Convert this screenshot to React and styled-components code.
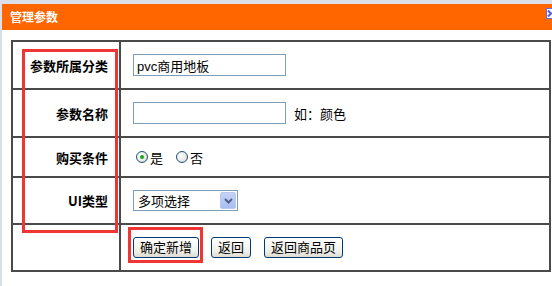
import React from "react";
import styled, { createGlobalStyle } from "styled-components";

const GlobalStyle = createGlobalStyle`
  html, body {
    margin: 0;
    padding: 0;
    background: #dadfea;
  }
  body {
    font-family: "Liberation Sans", "Noto Sans CJK SC", sans-serif;
    font-size: 13px;
    color: #000;
  }
`;

const Page = styled.div`
  position: relative;
  width: 552px;
  height: 286px;
  padding: 4px 0 0 2px;
  box-sizing: border-box;
  overflow: hidden;
`;

const Panel = styled.div`
  background: #fff;
  height: 100%;
`;

const Header = styled.div`
  display: flex;
  justify-content: space-between;
  align-items: center;
  height: 26px;
  background: #ff6600;
  padding-left: 8px;
  overflow: hidden;
`;

const Title = styled.span`
  color: #fff;
  font-family: "Noto Sans CJK SC", sans-serif;
  font-weight: bold;
  font-size: 12px;
  line-height: 12px;
`;

const CloseIcon = styled.svg`
  align-self: flex-start;
  margin-top: 4px;
  flex-shrink: 0;
`;

const Body = styled.div`
  padding: 10px 1px 0 9px;
`;

const FormGrid = styled.div`
  display: grid;
  grid-template-columns: 108px 1fr;
  grid-template-rows: 48px 48px 40px 47px 47px;
  border-top: 2px solid #4a4a4a;
  border-left: 2px solid #4a4a4a;
`;

const Cell = styled.div`
  display: flex;
  align-items: center;
  border-right: 2px solid #4a4a4a;
  border-bottom: 2px solid #4a4a4a;
  min-width: 0;
`;

const LabelCell = styled(Cell)`
  justify-content: flex-end;
  padding-right: 11px;
  font-family: "Noto Sans CJK SC", sans-serif;
  font-weight: bold;
  font-size: 13px;
`;

const ValueCell = styled(Cell)`
  padding-left: 12px;
  gap: ${({ $gap }) => $gap || 0}px;
`;

const TextInput = styled.input`
  width: 153px;
  height: 22px;
  box-sizing: border-box;
  border: 1px solid #7f9db9;
  padding: 0 3px;
  font-family: "Liberation Sans", "Noto Sans CJK SC", sans-serif;
  font-size: 13px;
  color: #000;
  outline: none;
`;

const Hint = styled.span`
  font-size: 13px;
`;

const RadioLabel = styled.label`
  display: flex;
  align-items: center;
  gap: 2px;
  margin-right: ${({ $mr }) => $mr || 0}px;
  font-size: 13px;
`;

const Radio = styled.input`
  appearance: none;
  margin: 0 0 0 3px;
  width: 12px;
  height: 12px;
  border-radius: 50%;
  border: 1px solid #1c5180;
  background: radial-gradient(circle at 35% 35%, #fff 0%, #e8e8e0 60%, #cfcfc4 100%);
  position: relative;
  &:checked::after {
    content: "";
    position: absolute;
    left: 3px;
    top: 3px;
    width: 4px;
    height: 4px;
    border-radius: 50%;
    background: #21a121;
  }
`;

const SelectBox = styled.div`
  display: flex;
  align-items: center;
  justify-content: space-between;
  width: 105px;
  height: 21px;
  box-sizing: border-box;
  border: 1px solid #7f9db9;
  padding: 0 1px 0 4px;
  font-size: 13px;
  background: #fff;
`;

const SelectArrow = styled.span`
  display: flex;
  align-items: center;
  justify-content: center;
  width: 16px;
  height: 17px;
  border-radius: 2px;
  background: linear-gradient(#c6d3f7, #a8bdf2);
  border: 1px solid #b9c9ef;
  box-sizing: border-box;
`;

const Button = styled.button`
  height: 21px;
  box-sizing: border-box;
  padding: 0 6px;
  margin-right: ${({ $mr }) => $mr || 0}px;
  border: 1px solid #003c74;
  border-radius: 3px;
  background: linear-gradient(#ffffff, #f0f0ea 70%, #dcdcd0);
  font-family: "Liberation Sans", "Noto Sans CJK SC", sans-serif;
  font-size: 13px;
  color: #000;
  line-height: 19px;
`;

const Mark = styled.div`
  position: absolute;
  left: ${({ $x }) => $x}px;
  top: ${({ $y }) => $y}px;
  width: ${({ $w }) => $w}px;
  height: ${({ $h }) => $h}px;
  border: 3px solid #f03535;
  box-sizing: border-box;
  pointer-events: none;
`;

export default function App() {
  return (
    <>
      <GlobalStyle />
      <Page>
        <Panel>
          <Header>
            <Title>管理参数</Title>
            <CloseIcon width="6" height="11" viewBox="0 0 6 11">
              <rect x="0.5" y="0.5" width="10" height="10" fill="#fff" stroke="#6a6ad8" />
              <path d="M2 2.5 L5 5.5 L2 8.5" fill="none" stroke="#5a5ad0" strokeWidth="2" />
            </CloseIcon>
          </Header>
          <Body>
            <FormGrid>
              <LabelCell>参数所属分类</LabelCell>
              <ValueCell>
                <TextInput defaultValue="pvc商用地板" />
              </ValueCell>

              <LabelCell>参数名称</LabelCell>
              <ValueCell $gap={8}>
                <TextInput defaultValue="" />
                <Hint>如：颜色</Hint>
              </ValueCell>

              <LabelCell>购买条件</LabelCell>
              <ValueCell>
                <RadioLabel $mr={10}>
                  <Radio type="radio" name="buy" defaultChecked />是
                </RadioLabel>
                <RadioLabel>
                  <Radio type="radio" name="buy" />否
                </RadioLabel>
              </ValueCell>

              <LabelCell>UI类型</LabelCell>
              <ValueCell>
                <SelectBox>
                  <span>多项选择</span>
                  <SelectArrow>
                    <svg width="9" height="6" viewBox="0 0 9 6">
                      <path d="M1 1 L4.5 4.5 L8 1" fill="none" stroke="#4d6185" strokeWidth="2" />
                    </svg>
                  </SelectArrow>
                </SelectBox>
              </ValueCell>

              <LabelCell />
              <ValueCell>
                <Button $mr={12}>确定新增</Button>
                <Button $mr={13}>返回</Button>
                <Button>返回商品页</Button>
              </ValueCell>
            </FormGrid>
          </Body>
        </Panel>
        <Mark $x={22} $y={49} $w={96} $h={184} />
        <Mark $x={128} $y={227} $w={75} $h={36} />
      </Page>
    </>
  );
}
